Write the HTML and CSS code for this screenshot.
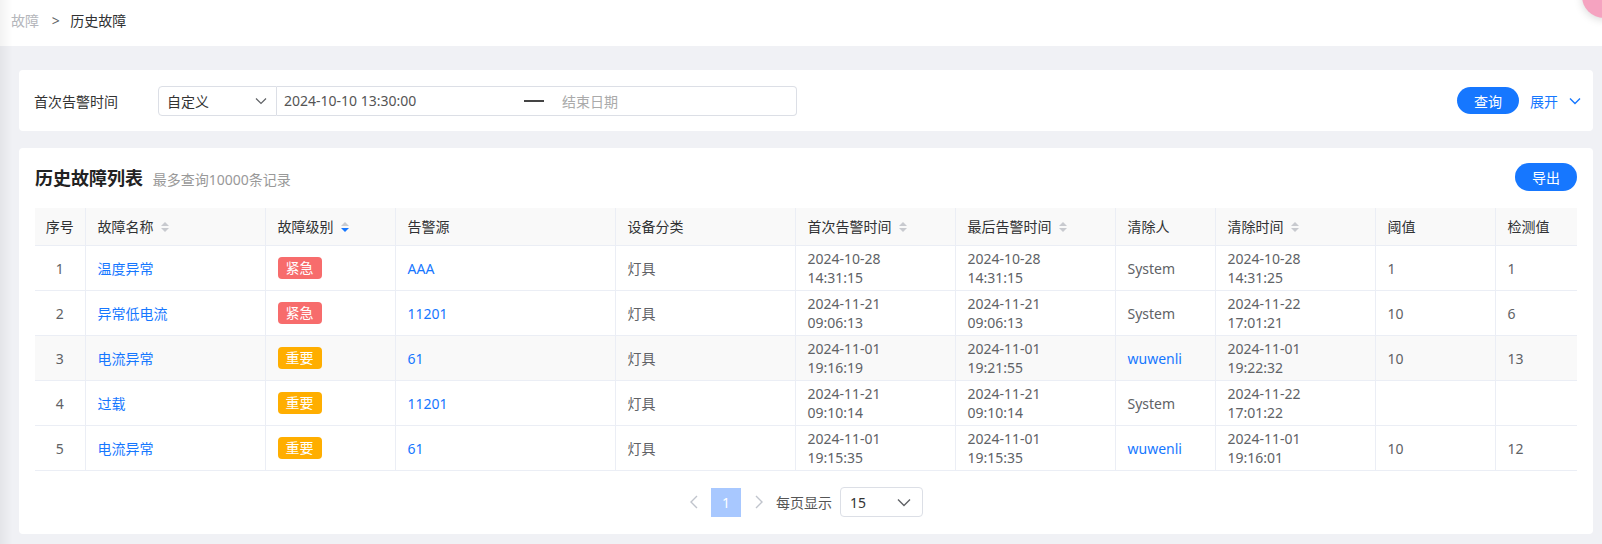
FILE: index.html
```html
<!DOCTYPE html>
<html lang="zh-CN">
<head>
    <meta charset="UTF-8">
    <meta name="viewport" content="width=device-width, initial-scale=1.0">
    <title>历史故障</title>
    <link rel="stylesheet" href="styles.css">
</head>
<body>
    <div class="side-shadow"></div>

    <!-- Breadcrumb -->
    <div class="topbar">
        <span class="crumb">故障</span>
        <span class="crumb-sep">&gt;</span>
        <span class="crumb-current">历史故障</span>
    </div>

    <div class="main">
        <!-- Filter -->
        <div class="card filter">
            <span class="filter-label">首次告警时间</span>
            <div class="range">
                <div class="range-type">
                    <span>自定义</span>
                    <svg width="12" height="8" viewBox="0 0 12 8"><path d="M1 1.5 L6 6.5 L11 1.5" fill="none" stroke="#606266" stroke-width="1.2"/></svg>
                </div>
                <div class="range-input">
                    <span class="range-start">2024-10-10 13:30:00</span>
                    <span class="range-dash"></span>
                    <span class="range-end">结束日期</span>
                </div>
            </div>
            <div class="filter-actions">
                <button class="btn">查询</button>
                <a href="#" class="expand">展开
                    <svg width="12" height="8" viewBox="0 0 12 8"><path d="M1 1.5 L6 6.5 L11 1.5" fill="none" stroke="#1677ff" stroke-width="1.4"/></svg>
                </a>
            </div>
        </div>

        <!-- List -->
        <div class="card list">
            <div class="list-head">
                <div>
                    <span class="list-title">历史故障列表</span>
                    <span class="list-sub">最多查询10000条记录</span>
                </div>
                <button class="btn">导出</button>
            </div>

            <table class="grid">
                <colgroup>
                    <col style="width: 50px">
                    <col style="width: 180px">
                    <col style="width: 130px">
                    <col style="width: 220px">
                    <col style="width: 180px">
                    <col style="width: 160px">
                    <col style="width: 160px">
                    <col style="width: 100px">
                    <col style="width: 160px">
                    <col style="width: 120px">
                    <col style="width: 82px">
                </colgroup>
                <thead>
                    <tr>
                        <th class="center">序号</th>
                        <th>故障名称 <i class="sort"><b class="up"></b><b class="down"></b></i></th>
                        <th>故障级别 <i class="sort"><b class="up"></b><b class="down on"></b></i></th>
                        <th>告警源</th>
                        <th>设备分类</th>
                        <th>首次告警时间 <i class="sort"><b class="up"></b><b class="down"></b></i></th>
                        <th>最后告警时间 <i class="sort"><b class="up"></b><b class="down"></b></i></th>
                        <th>清除人</th>
                        <th>清除时间 <i class="sort"><b class="up"></b><b class="down"></b></i></th>
                        <th>阈值</th>
                        <th>检测值</th>
                    </tr>
                </thead>
                <tbody>
                    <tr>
                        <td class="center">1</td>
                        <td><a href="#">温度异常</a></td>
                        <td><span class="tag urgent">紧急</span></td>
                        <td><a href="#">AAA</a></td>
                        <td>灯具</td>
                        <td>2024-10-28<br>14:31:15</td>
                        <td>2024-10-28<br>14:31:15</td>
                        <td>System</td>
                        <td>2024-10-28<br>14:31:25</td>
                        <td>1</td>
                        <td>1</td>
                    </tr>
                    <tr>
                        <td class="center">2</td>
                        <td><a href="#">异常低电流</a></td>
                        <td><span class="tag urgent">紧急</span></td>
                        <td><a href="#">11201</a></td>
                        <td>灯具</td>
                        <td>2024-11-21<br>09:06:13</td>
                        <td>2024-11-21<br>09:06:13</td>
                        <td>System</td>
                        <td>2024-11-22<br>17:01:21</td>
                        <td>10</td>
                        <td>6</td>
                    </tr>
                    <tr class="hover">
                        <td class="center">3</td>
                        <td><a href="#">电流异常</a></td>
                        <td><span class="tag major">重要</span></td>
                        <td><a href="#">61</a></td>
                        <td>灯具</td>
                        <td>2024-11-01<br>19:16:19</td>
                        <td>2024-11-01<br>19:21:55</td>
                        <td><a href="#" class="user">wuwenli</a></td>
                        <td>2024-11-01<br>19:22:32</td>
                        <td>10</td>
                        <td>13</td>
                    </tr>
                    <tr>
                        <td class="center">4</td>
                        <td><a href="#">过载</a></td>
                        <td><span class="tag major">重要</span></td>
                        <td><a href="#">11201</a></td>
                        <td>灯具</td>
                        <td>2024-11-21<br>09:10:14</td>
                        <td>2024-11-21<br>09:10:14</td>
                        <td>System</td>
                        <td>2024-11-22<br>17:01:22</td>
                        <td></td>
                        <td></td>
                    </tr>
                    <tr>
                        <td class="center">5</td>
                        <td><a href="#">电流异常</a></td>
                        <td><span class="tag major">重要</span></td>
                        <td><a href="#">61</a></td>
                        <td>灯具</td>
                        <td>2024-11-01<br>19:15:35</td>
                        <td>2024-11-01<br>19:15:35</td>
                        <td><a href="#" class="user">wuwenli</a></td>
                        <td>2024-11-01<br>19:16:01</td>
                        <td>10</td>
                        <td>12</td>
                    </tr>
                </tbody>
            </table>

            <!-- Pagination -->
            <div class="pager">
                <svg class="pager-arrow" width="10" height="14" viewBox="0 0 10 14"><path d="M8 1 L2 7 L8 13" fill="none" stroke="#c0c4cc" stroke-width="1.4"/></svg>
                <span class="page-num">1</span>
                <svg class="pager-arrow" width="10" height="14" viewBox="0 0 10 14"><path d="M2 1 L8 7 L2 13" fill="none" stroke="#c0c4cc" stroke-width="1.4"/></svg>
                <span class="page-label">每页显示</span>
                <div class="page-size">
                    <span>15</span>
                    <svg width="14" height="9" viewBox="0 0 14 9"><path d="M1 1.5 L7 7.5 L13 1.5" fill="none" stroke="#606266" stroke-width="1.4"/></svg>
                </div>
            </div>
        </div>
    </div>

    <div class="float-btn"></div>
</body>
</html>
```

FILE: styles.css
```css
/* Global */
body {
    margin: 0;
    background: #f0f1f5;
    font-family: "Noto Sans", "Noto Sans CJK SC", sans-serif;
    font-size: 14px;
    color: #606266;
    min-height: 544px;
}

a {
    color: #1677ff;
    text-decoration: none;
}

.side-shadow {
    position: fixed;
    top: 0;
    left: 0;
    bottom: 0;
    width: 12px;
    background: linear-gradient(to right, rgba(0, 0, 0, 0.05), rgba(0, 0, 0, 0));
    pointer-events: none;
}

/* Top bar */
.topbar {
    height: 46px;
    line-height: 42px;
    background: #fff;
    padding-left: 11px;
}

.crumb {
    color: #b4b6bb;
}

.crumb-sep {
    color: #606266;
    margin: 0 7px 0 9px;
}

.crumb-current {
    color: #303133;
}

/* Content */
.main {
    padding: 24px 9px 12px 19px;
}

.card {
    background: #fff;
    border-radius: 4px;
}

/* Filter */
.filter {
    height: 61px;
    display: flex;
    align-items: center;
    padding: 0 12px 0 15px;
}

.filter-label {
    width: 124px;
    color: #333;
}

.range {
    display: flex;
    height: 30px;
}

.range-type {
    width: 119px;
    box-sizing: border-box;
    border: 1px solid #dcdfe6;
    border-radius: 4px 0 0 4px;
    display: flex;
    align-items: center;
    justify-content: space-between;
    padding: 0 9px 0 8px;
    color: #333;
}

.range-input {
    width: 520px;
    box-sizing: border-box;
    border: 1px solid #dcdfe6;
    border-left: none;
    border-radius: 0 4px 4px 0;
    display: flex;
    align-items: center;
    padding-left: 7px;
}

.range-start {
    width: 240px;
    color: #555;
}

.range-dash {
    width: 20px;
    height: 2px;
    background: #444;
    margin-right: 18px;
}

.range-end {
    color: #aaa;
}

.filter-actions {
    margin-left: auto;
    display: flex;
    align-items: center;
}

.btn {
    height: 27px;
    width: 62px;
    border: none;
    border-radius: 14px;
    background: #1677ff;
    color: #fff;
    font-family: inherit;
    font-size: 14px;
    padding: 0;
    cursor: pointer;
}

.expand {
    margin-left: 11px;
    display: flex;
    align-items: center;
    gap: 11px;
}

/* List */
.list {
    margin-top: 17px;
    padding: 15px 16px 17px 16px;
}

.list-head {
    display: flex;
    justify-content: space-between;
    align-items: center;
    margin-bottom: 17px;
}

.list-head .btn {
    height: 28px;
}

.list-title {
    font-size: 18px;
    font-weight: bold;
    color: #222;
}

.list-sub {
    margin-left: 6px;
    color: #999;
}

/* Table */
.grid {
    width: 100%;
    border-collapse: collapse;
    table-layout: fixed;
}

.grid th,
.grid td {
    text-align: left;
    padding: 0 12px;
    line-height: 19px;
    border-bottom: 1px solid #ebeef5;
    border-left: 1px solid #ebeef5;
}

.grid th:first-child,
.grid td:first-child {
    border-left: none;
    padding: 0;
}

.grid th {
    height: 37px;
    background: #f9f9f9;
    font-weight: normal;
    color: #303133;
}

.grid td {
    height: 44px;
}

.grid .center {
    text-align: center;
}

.grid tr.hover td {
    background: #f9f9f9;
}

.sort {
    display: inline-flex;
    flex-direction: column;
    gap: 2px;
    vertical-align: middle;
    margin-left: 4px;
    position: relative;
    top: -1px;
}

.sort b {
    width: 0;
    height: 0;
    border-left: 4px solid transparent;
    border-right: 4px solid transparent;
}

.sort .up {
    border-bottom: 4px solid #c8cacf;
}

.sort .down {
    border-top: 4px solid #c8cacf;
}

.sort .down.on {
    border-top-color: #1677ff;
}

.tag {
    display: inline-block;
    width: 44px;
    height: 22px;
    line-height: 22px;
    text-align: center;
    border-radius: 4px;
    color: #fff;
}

.tag.urgent {
    background: #f76c6c;
}

.tag.major {
    background: #ffae00;
}

/* Pagination */
.pager {
    display: flex;
    justify-content: center;
    align-items: center;
    margin-top: 16px;
    height: 30px;
}

.pager-arrow {
    margin: 0 12px 0 0;
}

.page-num {
    width: 30px;
    height: 29px;
    line-height: 29px;
    text-align: center;
    background: #a8c8ff;
    color: #fff;
    margin-right: 13px;
}

.page-label {
    color: #555;
}

.page-size {
    margin-left: 8px;
    width: 83px;
    height: 30px;
    box-sizing: border-box;
    border: 1px solid #dcdfe6;
    border-radius: 4px;
    display: flex;
    align-items: center;
    justify-content: space-between;
    padding: 0 11px 0 9px;
    color: #333;
}

/* Floating helper button */
.float-btn {
    position: absolute;
    top: -26px;
    left: 1582px;
    width: 44px;
    height: 44px;
    border-radius: 50%;
    background: #f5a3c0;
    box-shadow: 0 2px 8px rgba(0, 0, 0, 0.15);
}
```
